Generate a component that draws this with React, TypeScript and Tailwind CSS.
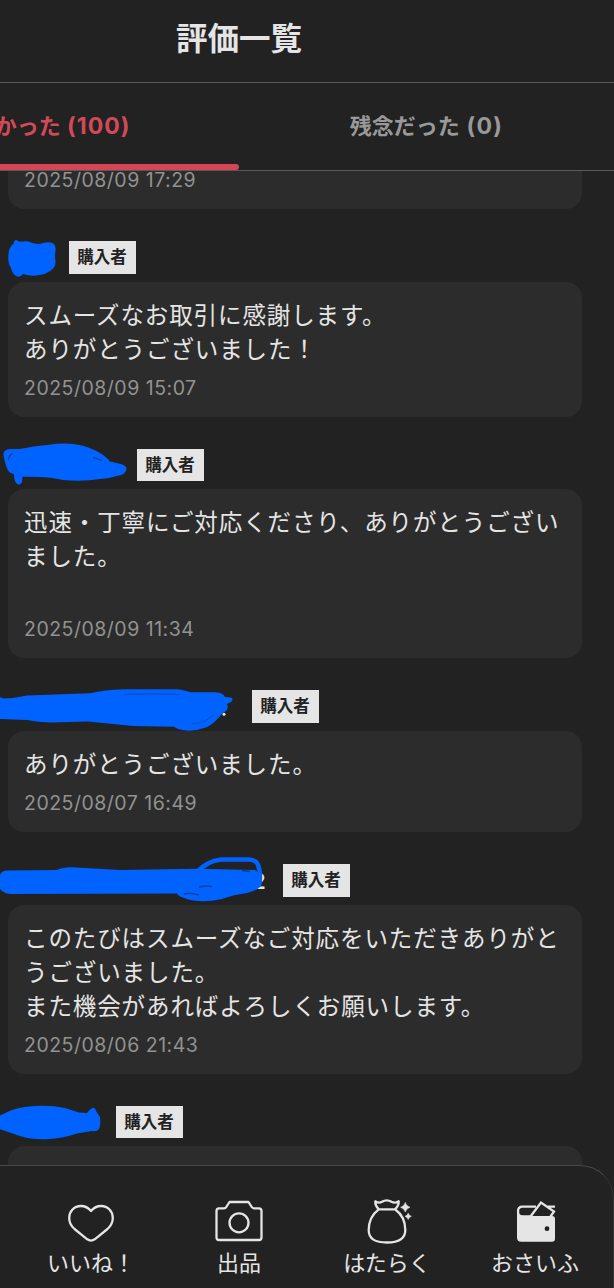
import React from 'react';

interface Review {
  nameWidth: string;
  name: React.ReactNode;
  lines: string[];
  date?: string;
}

const reviews: Review[] = [
  {
    nameWidth: 'w-[69px]',
    name: (
      <path
        fill="#0062ff"
        d="M8.300 16C8.500 9 10 5 13.500 3Q14-1 16-1L20 .7Q27-.6 31 1.500Q38 4 43 2Q51 0 54 3Q56 5 55.500 10Q54.500 15 55.500 20Q56 27 50 30Q46 33 40 34Q31 36 23 33Q20 37 16 35Q12 32 11 27Q8 23 8.300 16Z"
      />
    ),
    lines: ['スムーズなお取引に感謝します。', 'ありがとうございました！'],
    date: '2025/08/09 15:07',
  },
  {
    nameWidth: 'w-[137px]',
    name: (
      <>
        <path
          fill="#0062ff"
          d="M3.300 5Q4 0 11 0L20 0Q34-3 47-4Q67-7 82-3.500Q94 0 98 3Q106 7 110 12.500L121 15Q127 17 126.500 20Q126 24 121 26Q111 29 100 30Q82 33 63 31Q50 28 40 28L22.500 27.700L22 33Q21 36 18 35.500Q14 34 14 25Q8 24 7 19Q5 15 3.300 5Z"
        />
        <path d="M12.500 4.500Q9 6 8.500 11M93 8.500L102 11.500" stroke="#123a8c" strokeWidth="1.200" fill="none" />
      </>
    ),
    lines: ['迅速・丁寧にご対応くださり、ありがとうござい', 'ました。', ''],
    date: '2025/08/09 11:34',
  },
  {
    nameWidth: 'w-[252px]',
    name: (
      <>
        <path
          fill="#0062ff"
          d="M-1 7L4 8.500L13 8L27 5.500L90 3.300Q108-1 130-.8L177-.8Q185 0 190 2.300L215 2.300Q224 3 225 7L231 7.500Q234 9 231 12L227 14Q229 18 226 21Q222 23 220 26Q212 36 204 38Q190 43 178 39L174 36.700L133 36L88 31.500L50 32.500Q38 32 27 30L-1 29Z"
        />
        <path d="M124 4.500Q150 3 180 4.500M192 34Q206 33 213 25" stroke="#0b4cc0" strokeWidth="1" fill="none" />
        <circle cx="224" cy="24.300" r="1.500" fill="#e5e5e5" />
      </>
    ),
    lines: ['ありがとうございました。'],
    date: '2025/08/07 16:49',
  },
  {
    nameWidth: 'w-[283px]',
    name: (
      <>
        <text x="252" y="24.500" fontSize="22" fontWeight="600" fill="#e5e5e5">2</text>
        <path
          fill="#0062ff"
          d="M-1 15Q0 7 6 6.500L57 6Q63 3 72 3.300L120 6L197 4.700L255 6Q262 10 262 19Q262 25 247 29Q232 31 222 35Q200 40 184 34Q178 32 177 29.500L10 30Q2 29-1 23Z"
        />
        <path d="M197 8Q207-3 221-4.500L248-4.500Q256-4.500 258 1Q261 8 259.500 18" stroke="#0062ff" strokeWidth="4.500" fill="none" />
        <path d="M199 23Q206 21.500 212 22.500M184 30Q191 28.500 199 31M242 6.500L250 7.500" stroke="#123a8c" strokeWidth="1.300" fill="none" />
      </>
    ),
    lines: ['このたびはスムーズなご対応をいただきありがと', 'うございました。', 'また機会があればよろしくお願いします。'],
    date: '2025/08/06 21:43',
  },
  {
    nameWidth: 'w-[116px]',
    name: (
      <path
        fill="#0062ff"
        d="M-1 10Q14 2 25 1Q46-2 65 2L79 6.500L87 7Q89 4 92 2Q95 1 96 5L100 11Q101 18 99 23Q97 26 92 25L77 27.500Q63 32 50 33Q32 34 20 30L-1 23Z"
      />
    ),
    lines: [''],
  },
];

const navItems = [
  {
    label: 'いいね！',
    icon: (
      <path d="M24 13C21 9.500 18 8 14 8C7 8 2.200 13.400 2.200 20C2.200 24.500 4 28 7.500 31L20.300 41.300Q24 43.800 27.700 41.300L40.500 31C44 28 45.800 24.500 45.800 20C45.800 13.400 41 8 34 8C30 8 27 9.500 24 13Z" />
    ),
  },
  {
    label: '出品',
    icon: (
      <>
        <path d="M4 10.300H9Q10.500 10.300 11.300 9L14.500 4H33.500L36.700 9Q37.500 10.300 39 10.300H44Q46.500 10.300 46.500 13V39.500Q46.500 42 44 42H4Q1.500 42 1.500 39.500V13Q1.500 10.300 4 10.300Z" />
        <circle cx="24" cy="24.800" r="9.500" />
      </>
    ),
  },
  {
    label: 'はたらく',
    icon: (
      <>
        <path d="M15.700 11.300H32C38.500 16 42.300 24 42.300 32C42.300 41 36 44.500 24 44.500S5.700 41 5.700 32C5.700 24 9.500 16 15.700 11.300Z" />
        <path d="M15.700 11.300Q12 7.500 12.300 3.300Q16 5.800 19 3.800Q23.700 .8 28.500 3.800Q32 5.800 35.700 3.300Q36 7.500 32 11.300" />
        <path
          d="M42.300 4.500Q43.300 8.300 47 9.300Q43.300 10.300 42.300 14.100Q41.300 10.300 37.600 9.300Q41.300 8.300 42.300 4.500ZM45.200 15.200Q45.900 17.600 48.300 18.300Q45.900 19 45.200 21.400Q44.500 19 42.100 18.300Q44.500 17.600 45.200 15.200Z"
          fill="#e5e5e5"
          strokeWidth="0.600"
        />
      </>
    ),
  },
  {
    label: 'おさいふ',
    icon: (
      <>
        <path d="M25 8.700H11.500Q7 8.700 7 13.500Q7 18.500 11.500 18.500H20" />
        <path d="M6 13V39.500Q6 43.700 10.200 43.700H41Q44 43.700 44 40.700V21Q44 18 41 18H11Q7 18 6 13Z" fill="#e5e5e5" stroke="none" />
        <path d="M19.500 18.500L30 4.500L43 13.500L39.500 18.500M36.500 8.700H44" strokeLinejoin="miter" />
        <circle cx="36" cy="30.700" r="2.400" fill="#222222" stroke="none" />
      </>
    ),
  },
];

const ReviewDate = ({ children }: { children: React.ReactNode }) => (
  <p className="text-[19.5px] leading-[18px] tracking-[0.5px] text-[#929292]">{children}</p>
);

const ReviewItem = ({ review }: { review: Review }) => (
  <div className="mt-8 shrink-0">
    <div className="flex h-[32.67px]">
      <div className={review.nameWidth}>
        <svg className="h-full w-full overflow-visible">{review.name}</svg>
      </div>
      <span className="flex w-[67px] items-center justify-center bg-[#e5e5e5] pr-px text-[16.5px] font-bold text-[#222222]">
        {'購入者'}
      </span>
    </div>
    <div className="mt-2 mr-8 ml-2 rounded-2xl bg-[#2c2c2c] px-4 pt-[17px] pb-5">
      {review.lines.map((line, i) => (
        <p key={i} className="h-[34px] text-[23.5px] leading-[34px] tracking-[0.9px] whitespace-nowrap text-[#e5e5e5]">
          {line}
        </p>
      ))}
      {review.date && (
        <div className="mt-3">
          <ReviewDate>{review.date}</ReviewDate>
        </div>
      )}
    </div>
  </div>
);

export default function App() {
  return (
    <div className="flex h-[1288px] w-[614px] flex-col overflow-hidden bg-[#222222] font-['Inter','Noto_Sans_CJK_JP',sans-serif]">
      {/* The page is 750px wide and its left part runs off the screen */}
      <header className="flex h-[83px] shrink-0 justify-end border-b border-[#5a5a5a]">
        <h1 className="w-[750px] shrink-0 pt-4 text-center text-[31.5px] leading-[46px] font-bold text-[#e5e5e5]">
          評価一覧
        </h1>
      </header>

      <div className="flex h-[88px] shrink-0 justify-end border-b border-[#5a5a5a] text-[22px] font-bold">
        <button className="flex w-[375px] shrink-0 flex-col items-center justify-end text-[#d24a59]">
          <span className="pb-[22px] leading-8 whitespace-pre">
            良かった<span className="text-[23px] tracking-[1px]"> (100)</span>
          </span>
          <span className="h-[6px] w-full rounded-r-sm bg-[#d64556]" />
        </button>
        <button className="flex w-[375px] shrink-0 flex-col items-center justify-end text-[#999999]">
          <span className="pb-[28px] leading-8 whitespace-pre">
            残念だった<span className="text-[23px] tracking-[1.3px]"> (0)</span>
          </span>
        </button>
      </div>

      <main className="flex min-h-0 flex-1 flex-col overflow-hidden">
        <div className="mr-8 ml-2 flex h-[38px] shrink-0 items-end rounded-b-2xl bg-[#2c2c2c] px-4 pb-5">
          <ReviewDate>2025/08/09 17:29</ReviewDate>
        </div>
        {reviews.map((review, i) => (
          <ReviewItem key={i} review={review} />
        ))}
      </main>

      <nav className="flex h-[123px] shrink-0 justify-end rounded-tr-[34px] border-t border-r border-t-[#484848] border-r-[#333333] bg-[#222222] pt-8 pr-[4px]">
        {navItems.map((item) => (
          <a key={item.label} className="flex w-[148px] flex-col items-center text-[#e5e5e5]">
            <svg
              viewBox="0 0 48 48"
              className="h-12 w-12 overflow-visible"
              fill="none"
              stroke="#e5e5e5"
              strokeWidth="2.300"
              strokeLinejoin="round"
            >
              {item.icon}
            </svg>
            <span className="text-[22px] leading-[34px] whitespace-nowrap">{item.label}</span>
          </a>
        ))}
      </nav>
    </div>
  );
}
